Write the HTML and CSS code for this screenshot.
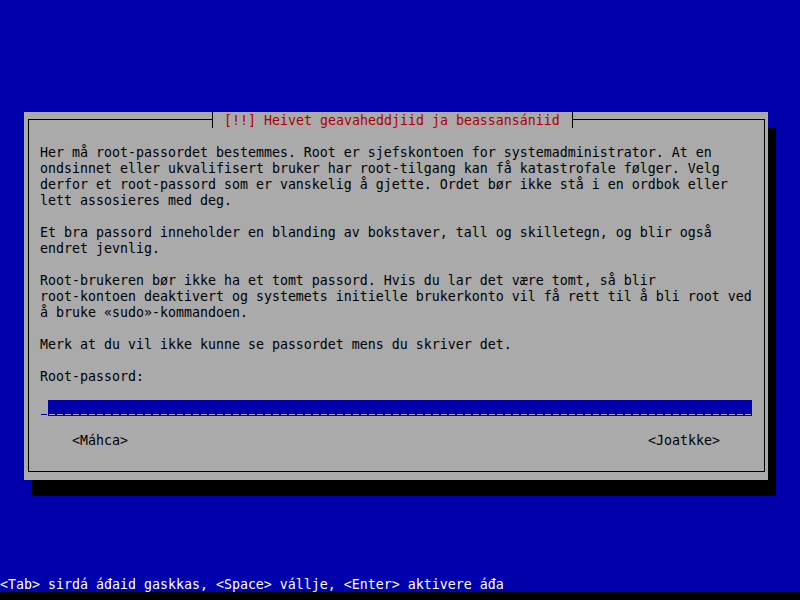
FILE: index.html
```html
<!DOCTYPE html>
<html lang="no">
<head>
<meta charset="utf-8">
<title>Root-passord</title>
<link rel="stylesheet" href="styles.css">
</head>
<body>
<div class="screen">
  <div class="dialog">
    <div class="title">[!!] Heivet geavaheddjiid ja beassansániid</div>
    <div class="frame">
      <p class="para">Her må root-passordet bestemmes. Root er sjefskontoen for systemadministrator. At en
ondsinnet eller ukvalifisert bruker har root-tilgang kan få katastrofale følger. Velg
derfor et root-passord som er vanskelig å gjette. Ordet bør ikke stå i en ordbok eller
lett assosieres med deg.</p>
      <p class="para">Et bra passord inneholder en blanding av bokstaver, tall og skilletegn, og blir også
endret jevnlig.</p>
      <p class="para">Root-brukeren bør ikke ha et tomt passord. Hvis du lar det være tomt, så blir
root-kontoen deaktivert og systemets initielle brukerkonto vil få rett til å bli root ved
å bruke «sudo»-kommandoen.</p>
      <p class="para">Merk at du vil ikke kunne se passordet mens du skriver det.</p>
      <p class="para">Root-passord:</p>
      <div class="field-row"><span class="cursor"></span><span class="field"></span></div>
      <div class="buttons"><span class="btn">&lt;Máhca&gt;</span><span class="btn">&lt;Joatkke&gt;</span></div>
    </div>
  </div>
  <div class="status">&lt;Tab&gt; sirdá áđaid gaskkas, &lt;Space&gt; vállje, &lt;Enter&gt; aktivere áđa</div>
  <div class="bottom"></div>
</div>
</body>
</html>
```

FILE: styles.css
```css
html, body {
  margin: 0;
  padding: 0;
  overflow: hidden;
  background: #0000aa;
}
.screen {
  width: 800px;
  height: 600px;
  display: flex;
  flex-direction: column;
  background: #0000aa;
  font-family: "DejaVu Sans Mono", "Liberation Mono", monospace;
  font-size: 13.29px;
  line-height: 16px;
  color: #000;
}
.dialog {
  position: relative;
  flex-shrink: 0;
  box-sizing: border-box;
  width: 744px;
  height: 368px;
  margin: 112px 0 0 24px;
  padding: 7px 3px 8px 4px;
  background: #aaaaaa;
  box-shadow: 8px 16px 0 0 #000;
}
.title {
  position: absolute;
  left: 188px;
  top: 0;
  box-sizing: border-box;
  height: 16px;
  padding: 1px 12px 0 11px;
  border-left: 1px solid #000;
  border-right: 1px solid #000;
  background: #aaaaaa;
  color: #aa0000;
  white-space: pre;
}
.frame {
  box-sizing: border-box;
  height: 353px;
  border: 1px solid #000;
  padding: 25px 0 0 11px;
}
.para {
  margin: 0 0 16px 0;
  white-space: pre;
}
.field-row {
  display: flex;
  height: 16px;
  margin-top: -1px;
}
.cursor {
  width: 8px;
  height: 16px;
  background: linear-gradient(#0000aa, #0000aa) 1px 14px / 6px 1px no-repeat;
}
.field {
  width: 704px;
  height: 16px;
  background:
    repeating-linear-gradient(to right, transparent 0 1px, #aaaaaa 1px 7px, transparent 7px 8px) 0 14px / 100% 1px no-repeat,
    #0000aa;
}
.buttons {
  display: flex;
  justify-content: space-between;
  width: 648px;
  margin: 17px 0 0 32px;
}
.btn {
  white-space: pre;
}
.status {
  margin-top: auto;
  height: 16px;
  color: #ffffff;
  white-space: pre;
  padding-top: 1px;
  box-sizing: border-box;
}
.bottom {
  height: 8px;
  background: #000;
  flex-shrink: 0;
}
```
